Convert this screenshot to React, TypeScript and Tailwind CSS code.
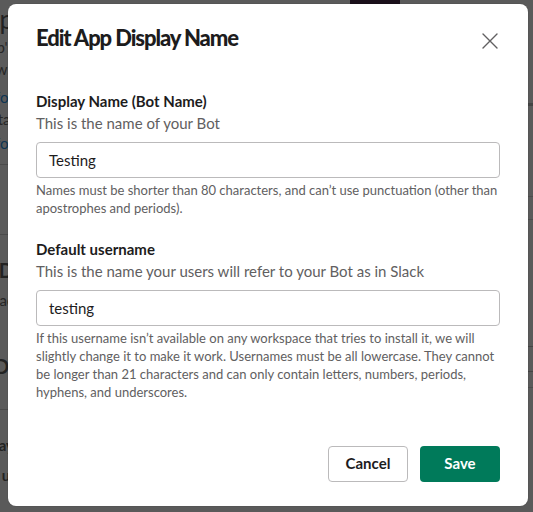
import React from "react";

const font = { fontFamily: "Lato, 'Noto Sans', sans-serif" };

function LeftFrag() {
  const rows: { h: number; text: string; cls: string }[] = [
    { h: 34, text: "App", cls: "text-[26px] leading-[34px] text-[#222]" },
    { h: 22, text: "App's", cls: "text-[15px] leading-[22px] text-[#262626]" },
    { h: 28, text: "ws", cls: "text-[15px] leading-[22px] text-[#262626]" },
    { h: 22, text: "for", cls: "text-[15px] leading-[22px] text-[#0d3552]" },
    { h: 24, text: "tal", cls: "text-[15px] leading-[22px] text-[#262626]" },
    { h: 22, text: "for", cls: "text-[15px] leading-[22px] text-[#0d3552]" },
  ];
  return (
    <div className="flex flex-col w-[14px] overflow-hidden">
      <div className="h-[2px]" />
      {rows.map((r, i) => (
        <div key={i} className="flex justify-end whitespace-nowrap" style={{ height: r.h }}>
          <span className={r.cls}>{r.text}</span>
        </div>
      ))}
      <div className="h-[10px]" />
      <div className="h-px bg-[#4a4a4a]" />
      <div className="h-[69px]" />
      <div className="h-px bg-[#4a4a4a]" />
      <div className="h-[22px]" />
      <div className="flex justify-end whitespace-nowrap h-[26px]">
        <span className="text-[20px] leading-[26px] font-bold text-[#222]">AD</span>
      </div>
      <div className="h-[6px]" />
      <div className="flex justify-end whitespace-nowrap h-[22px]">
        <span className="text-[15px] leading-[22px] text-[#262626]">ac</span>
      </div>
      <div className="h-[42px]" />
      <div className="flex justify-end whitespace-nowrap h-[26px]">
        <span className="text-[20px] leading-[26px] font-bold text-[#222]">Di</span>
      </div>
      <div className="h-[30px]" />
      <div className="h-px bg-[#4a4a4a]" />
      <div className="h-[24px]" />
      <div className="flex justify-end whitespace-nowrap h-[22px]">
        <span className="text-[15px] leading-[22px] font-bold text-[#222]">ay</span>
      </div>
      <div className="h-[8px]" />
      <div className="flex justify-end whitespace-nowrap h-[22px]">
        <span className="text-[15px] leading-[22px] font-bold text-[#222]">ul</span>
      </div>
    </div>
  );
}

export default function App() {
  return (
    <div className="relative w-[533px] h-[512px] overflow-hidden bg-[#5a5a5a]" style={font}>
      {/* dimmed page behind */}
      <div className="flex h-full">
        <LeftFrag />
        <div className="flex-1 flex flex-col">
          <div className="flex h-[4px]">
            <div className="w-[336px]" />
            <div className="w-[50px] bg-[#1a0f1a]" />
          </div>
        </div>
        <div className="w-[6px] flex flex-col">
          <div className="h-[103px]" />
          <div className="h-[3px] bg-[#444]" />
          <div className="h-[90px]" />
          <div className="h-px bg-[#4c4c4c]" />
          <div className="h-[22px]" />
          <div className="h-px bg-[#4c4c4c]" />
          <div className="h-[126px]" />
          <div className="h-px bg-[#444]" />
          <div className="h-[24px]" />
          <div className="h-px bg-[#444]" />
          <div className="h-[15px]" />
          <div className="h-px bg-[#4c4c4c]" />
        </div>
      </div>

      {/* modal */}
      <div className="absolute left-[8px] top-[4px] w-[520px] h-[502px] bg-white rounded-[8px] flex flex-col shadow-[0_0_0_1px_rgba(0,0,0,0.05)]">
        <div className="flex items-start justify-between px-7 pt-5">
          <h1 className="text-[22px] leading-[28px] font-black text-[#1d1c1d] tracking-[-1.1px]">
            Edit App Display Name
          </h1>
          <svg width="20" height="20" viewBox="0 0 20 20" className="mt-[7px]" fill="none">
            <path d="M3 3 L17 17 M17 3 L3 17" stroke="#616061" strokeWidth="1.4" strokeLinecap="round" />
          </svg>
        </div>

        <div className="px-7 mt-[38px] flex flex-col">
          <div className="text-[15px] leading-[22px] font-bold text-[#1d1c1d]">Display Name (Bot Name)</div>
          <div className="text-[15px] leading-[22px] text-[#616061]">This is the name of your Bot</div>
          <div className="mt-2 h-9 border border-[#bbbabb] rounded-[4px] px-3 flex items-center text-[15px] text-[#1d1c1d]">
            Testing
          </div>
          <div className="mt-[3px] text-[13px] leading-[18px] text-[#616061]">
            Names must be shorter than 80 characters, and can’t use punctuation (other than apostrophes and periods).
          </div>

          <div className="mt-[21px] text-[15px] leading-[22px] font-bold text-[#1d1c1d]">Default username</div>
          <div className="text-[15px] leading-[22px] text-[#616061]">This is the name your users will refer to your Bot as in Slack</div>
          <div className="mt-2 h-9 border border-[#bbbabb] rounded-[4px] px-3 flex items-center text-[15px] text-[#1d1c1d]">
            testing
          </div>
          <div className="mt-[3px] text-[13px] leading-[18px] text-[#616061]">
            If this username isn’t available on any workspace that tries to install it, we will slightly change it to make it work. Usernames must be all lowercase. They cannot be longer than 21 characters and can only contain letters, numbers, periods, hyphens, and underscores.
          </div>
        </div>

        <div className="mt-auto flex justify-end gap-3 px-7 pb-6">
          <button className="w-20 h-9 rounded-[4px] border border-[#bbbabb] bg-white text-[15px] leading-[22px] font-bold text-[#1d1c1d] pb-[2px]">
            Cancel
          </button>
          <button className="w-20 h-9 rounded-[4px] bg-[#007a5a] text-[15px] leading-[22px] font-bold text-white pb-[2px]">
            Save
          </button>
        </div>
      </div>
    </div>
  );
}
